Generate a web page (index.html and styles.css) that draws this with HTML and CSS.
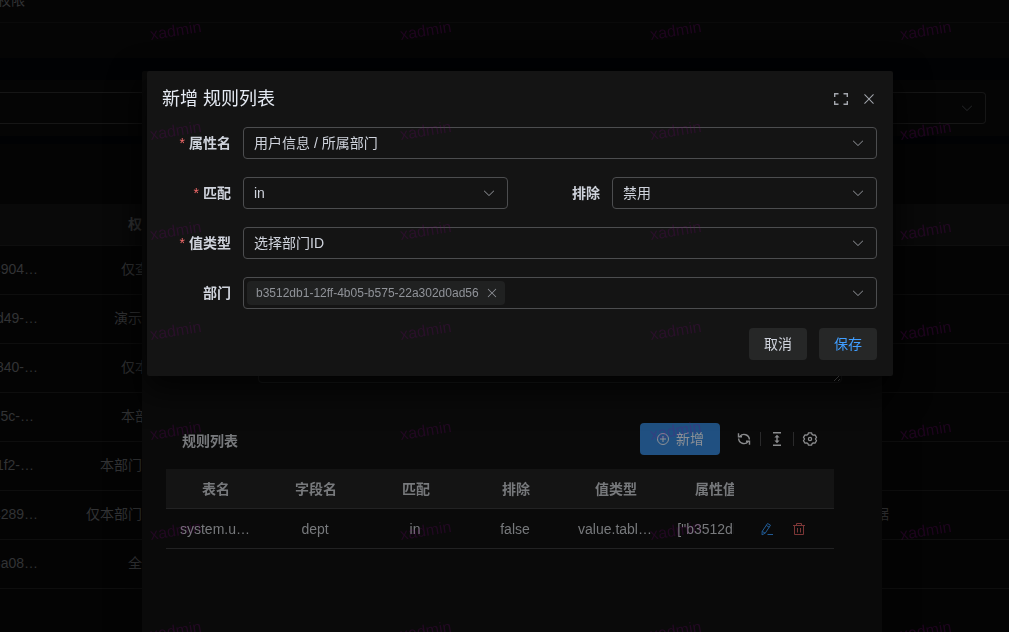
FILE: index.html
```html
<!DOCTYPE html>
<html lang="zh-CN">
<head>
<meta charset="utf-8">
<title>新增 规则列表</title>
<link rel="stylesheet" href="styles.css">
</head>
<body>
<svg class="sprite" aria-hidden="true">
  <symbol id="i-down" viewBox="0 0 1024 1024"><path d="M831.872 340.864 512 652.672 192.128 340.864a30.592 30.592 0 0 0-42.752 0 29.12 29.12 0 0 0 0 41.6L489.664 714.24a32 32 0 0 0 44.672 0l340.288-331.712a29.12 29.12 0 0 0 0-41.728 30.592 30.592 0 0 0-42.752 0z"/></symbol>
  <symbol id="i-close" viewBox="0 0 1024 1024"><path d="M764.288 214.592 512 466.88 259.712 214.592a31.936 31.936 0 0 0-45.12 45.12L466.752 512 214.528 764.224a31.936 31.936 0 1 0 45.12 45.184L512 557.184l252.288 252.288a31.936 31.936 0 0 0 45.12-45.12L557.12 512.064l252.288-252.352a31.936 31.936 0 1 0-45.12-45.184z"/></symbol>
</svg>

<div class="page">
  <header class="topbar"><nav class="crumb">权限</nav></header>
  <div class="tabs"></div>
  <section class="search">
    <div class="pick pick-dim">
      <select aria-label="筛选"><option></option></select>
      <svg class="arrow"><use href="#i-down"/></svg>
    </div>
  </section>
  <section class="list">
    <table class="roles">
      <colgroup><col class="c-id"><col class="c-name"><col><col class="c-end"></colgroup>
      <thead><tr><th></th><th>权限名称</th><th></th><th></th></tr></thead>
      <tbody>
        <tr><td><div class="tail">4904…</div></td><td>仅查看数据</td><td></td><td></td></tr>
        <tr><td><div class="tail">d49-…</div></td><td>演示数据权限</td><td></td><td></td></tr>
        <tr><td><div class="tail">840-…</div></td><td>仅本人数据</td><td></td><td></td></tr>
        <tr><td><div class="tail short">5c-…</div></td><td>本部门数据</td><td></td><td></td></tr>
        <tr><td><div class="tail short">1f2-…</div></td><td>本部门及以下数据</td><td></td><td></td></tr>
        <tr><td><div class="tail">4289…</div></td><td>仅本部门及以下的数据</td><td class="desc">数据</td><td></td></tr>
        <tr><td><div class="tail">8a08…</div></td><td>全部数据</td><td></td><td></td></tr>
      </tbody>
    </table>
  </section>
</div>

<section class="panel">
  <textarea class="note" aria-label="描述"></textarea>
  <div class="rules">
    <div class="toolbar">
      <h2>规则列表</h2>
      <button class="add" type="button">
        <svg viewBox="0 0 14 14"><g fill="none" stroke="currentColor"><circle cx="7" cy="7" r="5.5"/><path d="M7 4v6M4 7h6"/></g></svg>
        新增
      </button>
      <button class="tool" type="button" aria-label="刷新"><svg viewBox="0 0 16 16"><g fill="none" stroke="currentColor" stroke-width="1.4"><path d="M4 5.200a5.400 5.400 0 0 1 9.400 3.300M12 10.800A5.400 5.400 0 0 1 2.600 7.500"/><path d="M2.500 2.200v3.500h3.500M13.500 13.800v-3.500H10"/></g></svg></button>
      <i class="bar"></i>
      <button class="tool" type="button" aria-label="密度"><svg viewBox="0 0 16 16"><path fill="currentColor" d="M4 1h8v1.500H4zM4 13.500h8V15H4zM8 3.800l2.600 2.800H8.700v2.800h1.900L8 12.200 5.400 9.400h1.900V6.600H5.400z"/></svg></button>
      <i class="bar"></i>
      <button class="tool" type="button" aria-label="设置"><svg viewBox="0 0 16 16"><g fill="none" stroke="currentColor" stroke-width="1.3" stroke-linejoin="round"><path d="M6.500 1.800h3l.6 1.600 1.200.7 1.700-.3 1.500 2.600L13.400 8l1.100 1.600-1.500 2.600-1.700-.3-1.200.7-.6 1.600h-3l-.6-1.600-1.200-.7-1.700.3-1.500-2.600L2.600 8 1.500 6.400 3 3.800l1.700.3 1.200-.7z"/><circle cx="8" cy="8" r="1.600"/></g></svg></button>
    </div>
    <table class="grid">
      <colgroup><col class="w"><col class="w"><col class="w"><col class="w"><col class="w"><col><col class="w"></colgroup>
      <thead><tr><th>表名</th><th>字段名</th><th>匹配</th><th>排除</th><th>值类型</th><th class="cut"><div>属性值</div></th><th></th></tr></thead>
      <tbody><tr>
        <td>system.u…</td><td>dept</td><td>in</td><td>false</td><td>value.tabl…</td>
        <td class="cut"><div>["b3512db…</div></td>
        <td><div class="ops">
          <button class="edit" type="button" aria-label="编辑"><svg viewBox="0 0 14 14"><g fill="none" stroke="currentColor"><path d="M7.500 1.500 10.500 3.200 5.200 11.200 2 12.800 2.200 9.400zM6.200 3.400l3 1.800M2.200 9.400l3 1.800M7.500 12.500H13"/></g></svg></button>
          <button class="del" type="button" aria-label="删除"><svg viewBox="0 0 14 14"><g fill="none" stroke="currentColor"><path d="M1 3.500h12M4.500 3.500v-2h5v2M2.500 3.500v9h9v-9M5.500 6v4.500M8.500 6v4.500"/></g></svg></button>
        </div></td>
      </tr></tbody>
    </table>
  </div>
</section>

<form class="modal" role="dialog" aria-labelledby="title">
  <div class="head">
    <h1 id="title">新增 规则列表</h1>
    <button type="button" aria-label="全屏"><svg viewBox="0 0 16 16"><path fill="none" stroke="currentColor" stroke-width="1.400" d="M1.700 6V2.700H5.500M10.500 2.700H14.300V6M14.300 10V13.300H10.500M5.500 13.300H1.700V10"/></svg></button>
    <button type="button" aria-label="关闭"><svg><use href="#i-close"/></svg></button>
  </div>
  <div class="fields">
    <div class="field wide">
      <label class="must" for="attr">属性名</label>
      <div class="pick"><select id="attr"><option>用户信息 / 所属部门</option></select><svg class="arrow"><use href="#i-down"/></svg></div>
    </div>
    <div class="field">
      <label class="must" for="match">匹配</label>
      <div class="pick"><select id="match"><option>in</option></select><svg class="arrow"><use href="#i-down"/></svg></div>
    </div>
    <div class="field">
      <label for="exclude">排除</label>
      <div class="pick"><select id="exclude"><option>禁用</option></select><svg class="arrow"><use href="#i-down"/></svg></div>
    </div>
    <div class="field wide">
      <label class="must" for="kind">值类型</label>
      <div class="pick"><select id="kind"><option>选择部门ID</option></select><svg class="arrow"><use href="#i-down"/></svg></div>
    </div>
    <div class="field wide">
      <label for="dept">部门</label>
      <div class="tags">
        <span class="tag">b3512db1-12ff-4b05-b575-22a302d0ad56<button type="button" aria-label="移除"><svg><use href="#i-close"/></svg></button></span>
        <input id="dept" type="text">
        <svg class="arrow"><use href="#i-down"/></svg>
      </div>
    </div>
  </div>
  <div class="foot">
    <button type="button">取消</button>
    <button class="save" type="submit">保存</button>
  </div>
</form>

<div class="marks" aria-hidden="true">
  <span>xadmin</span><span>xadmin</span><span>xadmin</span><span>xadmin</span>
  <span>xadmin</span><span>xadmin</span><span>xadmin</span><span>xadmin</span>
  <span>xadmin</span><span>xadmin</span><span>xadmin</span><span>xadmin</span>
  <span>xadmin</span><span>xadmin</span><span>xadmin</span><span>xadmin</span>
  <span>xadmin</span><span>xadmin</span><span>xadmin</span><span>xadmin</span>
  <span>xadmin</span><span>xadmin</span><span>xadmin</span><span>xadmin</span>
  <span>xadmin</span><span>xadmin</span><span>xadmin</span><span>xadmin</span>
</div>
</body>
</html>
```
FILE: styles.css
```css
* { box-sizing: border-box; }

body {
  margin: 0;
  height: 100vh;
  overflow: hidden;
  background: #010204;
  color: #cfd3dc;
  font: 14px/20px "Liberation Sans", "Noto Sans CJK SC", sans-serif;
}

button, select, input, textarea { font: inherit; color: inherit; }
button { padding: 0; border: 0; background: none; }
h1, h2 { margin: 0; }
svg { display: block; fill: currentColor; }
.sprite { display: none; }

/* Page behind the dialogs */
.page { height: 100vh; display: flex; flex-direction: column; color: #323335; }
.topbar { height: 23px; overflow: hidden; background: #050505; border-bottom: 1px solid #0a0a0a; }
.crumb { display: flex; justify-content: flex-end; width: 25px; margin-top: -10px; white-space: nowrap; }
.tabs { height: 35px; background: #050505; }
.search { margin: 22px 0 8px; padding: 12px 23px 12px 0; background: #050505; }
.list { flex: 1; padding-top: 60px; background: #040404; }

.roles, .grid { width: 100%; border-collapse: separate; border-spacing: 0; table-layout: fixed; }
.roles th, .roles td {
  height: 49px;
  padding: 0 0 2px;
  border-bottom: 1px solid #0e0e0e;
  text-align: center;
  font-weight: 400;
  white-space: nowrap;
}
.roles th { height: 42px; background: #090909; font-weight: 700; }
.c-id { width: 38px; }
.c-name { width: 236px; }
.c-end { width: 120px; }
.tail { display: flex; justify-content: flex-end; overflow: hidden; }
.short { padding-right: 4px; }
.roles .desc { text-align: right; }

/* Selects */
.pick { display: grid; align-items: center; flex: 1; min-width: 0; }
.pick select {
  grid-area: 1 / 1;
  width: 100%;
  height: 32px;
  padding: 0 30px 0 10px;
  border: 1px solid #4c4d4f;
  border-radius: 4px;
  background: transparent;
  appearance: none;
}
.pick .arrow { grid-area: 1 / 1; justify-self: end; margin-right: 12px; pointer-events: none; }
.arrow { width: 14px; height: 14px; color: #8d9095; }
.pick-dim select { border-color: #161616; border-left: 0; border-radius: 0 4px 4px 0; }
.pick-dim .arrow { color: #252628; }

/* Edit panel below the front dialog */
.panel {
  position: fixed;
  top: 71px;
  right: 127px;
  bottom: 0;
  left: 142px;
  padding: 252px 40px 0 16px;
  border-radius: 2px 2px 0 0;
  background: #0a0a0a;
  box-shadow: 0 12px 32px 4px rgba(0, 0, 0, .36);
  color: #77797c;
}
.note {
  display: block;
  width: calc(100% - 100px);
  height: 60px;
  margin-left: 100px;
  border: 1px solid #222324;
  border-radius: 4px;
  background: transparent;
  color-scheme: dark;
  opacity: .7;
}
.rules { padding: 40px 8px 0; }
.toolbar { display: flex; align-items: center; margin-bottom: 14px; padding: 0 16px; }
.toolbar h2 { flex: 1; padding-top: 4px; font-size: 14px; line-height: 20px; }
.add {
  display: flex;
  align-items: center;
  justify-content: center;
  gap: 6px;
  width: 80px;
  height: 32px;
  margin-right: 16px;
  border-radius: 4px;
  background: #205081;
  color: #8c9096;
}
.add svg { width: 14px; height: 14px; }
.tool { width: 16px; color: #8a8b8d; }
.tool svg { width: 16px; height: 16px; }
.bar { width: 1px; height: 14px; margin: 0 8px; background: #2a2a2b; }
.w { width: 100px; }
.grid th, .grid td {
  height: 40px;
  padding: 0 2px 0 0;
  border-bottom: 1px solid #222223;
  text-align: center;
  white-space: nowrap;
}
.grid th { padding: 0; background: #141414; }
.grid .cut { padding: 0; overflow: hidden; }
.cut div { width: 100px; }
.ops { display: flex; justify-content: center; gap: 18px; }
.ops svg { width: 14px; height: 14px; }
.edit { color: #205a94; }
.del { color: #7c3636; }

/* Front dialog */
.modal {
  position: fixed;
  top: 71px;
  right: 116px;
  left: 147px;
  padding: 16px 16px 16px 15px;
  border-radius: 2px;
  background: #141414;
  box-shadow: 0 12px 32px 4px rgba(0, 0, 0, .72);
}
.head { display: flex; align-items: center; gap: 12px; height: 24px; margin-bottom: 16px; }
.head h1 { flex: 1; color: #e5eaf3; font-size: 18px; font-weight: 400; line-height: 24px; }
.head button { color: #a3a6ad; }
.head svg { width: 16px; height: 16px; }
.fields { display: grid; grid-template-columns: 1fr 1fr; gap: 18px 23px; }
.field { display: flex; align-items: center; gap: 12px; min-width: 0; }
.wide { grid-column: 1 / -1; }
.field label { width: 69px; text-align: right; font-weight: 700; }
.must::before { content: "*"; margin-right: 4px; color: #f56c6c; font-weight: 400; }
.tags {
  display: flex;
  align-items: center;
  flex: 1;
  min-width: 0;
  height: 32px;
  padding: 0 11px 0 3px;
  border: 1px solid #4c4d4f;
  border-radius: 4px;
}
.tag {
  display: flex;
  align-items: center;
  gap: 6px;
  height: 24px;
  padding: 0 6px 0 9px;
  border-radius: 4px;
  background: #202121;
  color: #909399;
  font-size: 12px;
}
.tag svg { width: 14px; height: 14px; }
.tags input { flex: 1; min-width: 0; border: 0; outline: 0; background: transparent; }
.foot { display: flex; justify-content: flex-end; gap: 12px; margin-top: 19px; }
.foot button { width: 58px; height: 32px; border-radius: 4px; background: #262727; }
.foot .save { color: #409eff; }

/* Watermark */
.marks {
  position: fixed;
  inset: 0;
  display: grid;
  grid-template-columns: repeat(4, 250px);
  grid-auto-rows: 100px;
  padding: 21px 0 0 150px;
  overflow: hidden;
  pointer-events: none;
  color: rgba(128, 0, 128, .2);
  font-size: 16px;
}
.marks span { justify-self: start; align-self: start; transform: rotate(-9deg); }
```
